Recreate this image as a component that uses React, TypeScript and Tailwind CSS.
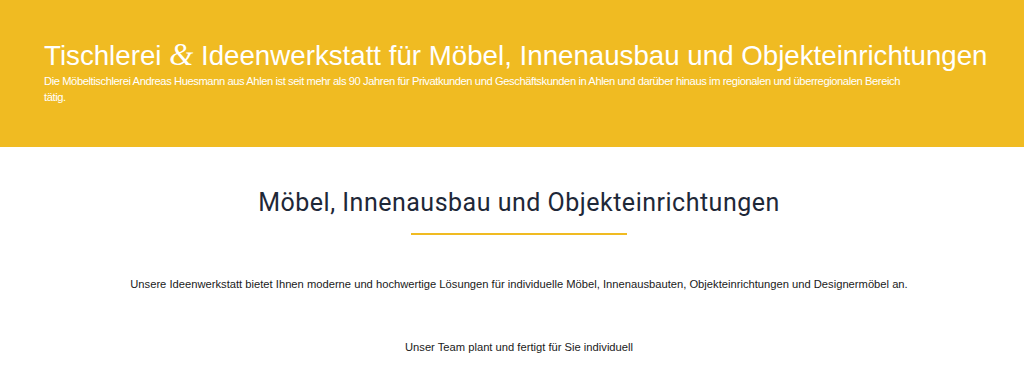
export default function App() {
  return (
    <div className="w-[1024px] min-h-[391px] bg-white" style={{ fontFamily: '"Liberation Sans", Arial, sans-serif' }}>
      <header className="h-[147px] bg-[#f0bb22] pl-[44px] pr-[20px] pt-[40px] text-white">
        <h1 className="text-[27.7px] leading-[32px] font-normal whitespace-nowrap">
          Tischlerei{" "}
          <span className="italic text-[31px] leading-[20px]" style={{ fontFamily: '"Liberation Serif", serif' }}>&amp;</span>{" "}
          Ideenwerkstatt für Möbel, Innenausbau und Objekteinrichtungen
        </h1>
        <p className="mt-[1px] text-[11.2px] leading-[16px] tracking-[-0.42px] w-[870px]">
          Die Möbeltischlerei Andreas Huesmann aus Ahlen ist seit mehr als 90 Jahren für Privatkunden und Geschäftskunden in Ahlen und darüber hinaus im regionalen und überregionalen Bereich tätig.
        </p>
      </header>
      <section className="flex flex-col items-center pt-[41px] pl-[14px]">
        <h2 className="text-[25px] leading-[30px] text-[#1e2838] tracking-[0.5px]" style={{ fontFamily: 'Roboto, sans-serif' }}>
          Möbel, Innenausbau und Objekteinrichtungen
        </h2>
        <div className="mt-[15px] h-[2px] w-[216px] bg-[#f0bb22]" />
        <p className="mt-[41px] text-[11.2px] leading-[16px] text-[#1a1a1a]">
          Unsere Ideenwerkstatt bietet Ihnen moderne und hochwertige Lösungen für individuelle Möbel, Innenausbauten, Objekteinrichtungen und Designermöbel an.
        </p>
        <p className="mt-[47px] text-[11.2px] leading-[16px] text-[#1a1a1a]">
          Unser Team plant und fertigt für Sie individuell
        </p>
      </section>
    </div>
  );
}
